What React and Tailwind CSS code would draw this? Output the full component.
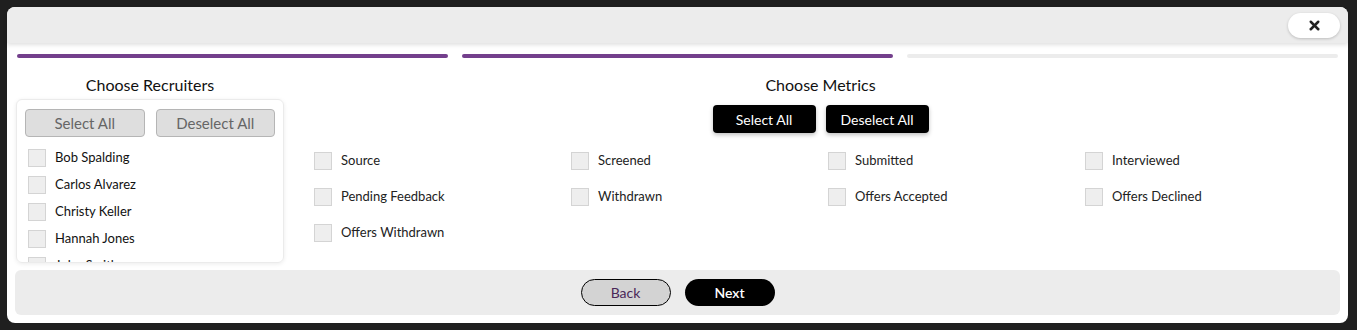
import React from 'react';
import { X } from 'lucide-react';

const recruiters = ['Bob Spalding', 'Carlos Alvarez', 'Christy Keller', 'Hannah Jones', 'John Smith'];

const metrics = [
  'Source', 'Screened', 'Submitted', 'Interviewed',
  'Pending Feedback', 'Withdrawn', 'Offers Accepted', 'Offers Declined',
  'Offers Withdrawn',
];

const Box = () => (
  <span className="inline-block w-[18px] h-[18px] bg-[#eeeeee] border border-[#d4d4d4] shrink-0" />
);

const App = () => {
  return (
    <div
      className="w-[1357px] h-[330px] bg-[#1f1f1f] pt-[7px] pl-[7px] overflow-hidden"
      style={{ fontFamily: 'Lato, "Noto Sans", sans-serif' }}
    >
      <div className="w-[1341px] h-[316px] bg-white rounded-[8px] flex flex-col">
        {/* header */}
        <div className="h-[36px] bg-[#ececec] rounded-t-[8px] shadow-[0_2px_4px_rgba(0,0,0,0.12)] flex items-center justify-end pr-[8px] shrink-0">
          <button className="w-[52px] h-[25px] rounded-full bg-white shadow-[0_1px_3px_rgba(0,0,0,0.2)] flex items-center justify-center">
            <X className="w-[15px] h-[15px] text-[#222]" strokeWidth={4} />
          </button>
        </div>

        {/* progress */}
        <div className="flex gap-[14px] px-[10px] mt-[11px]">
          <div className="h-[4px] w-[431px] rounded-full bg-[#733f8c]" />
          <div className="h-[4px] w-[431px] rounded-full bg-[#733f8c]" />
          <div className="h-[4px] w-[431px] rounded-full bg-[#ececec]" />
        </div>

        {/* body */}
        <div className="flex flex-1 min-h-0 pl-[9px] mt-[17px]">
          <div className="w-[268px] flex flex-col">
            <h3 className="text-[16px] leading-[20px] text-[#111] text-center">Choose Recruiters</h3>
            <div className="mt-[4px] h-[164px] border border-[#ebebeb] rounded-[6px] shadow-[0_1px_4px_rgba(0,0,0,0.08)] px-[8px] pt-[9px] overflow-hidden">
              <div className="flex gap-[11px]">
                <button className="w-[120px] h-[28px] bg-[#dedede] border border-[#b5b5b5] rounded-[4px] text-[15px] text-[#666]">Select All</button>
                <button className="w-[120px] h-[28px] bg-[#dedede] border border-[#b5b5b5] rounded-[4px] text-[15px] text-[#666]">Deselect All</button>
              </div>
              <ul className="mt-[12px] pl-[3px] flex flex-col gap-[9px]">
                {recruiters.map((r) => (
                  <li key={r} className="flex items-center gap-[9px] h-[18px] text-[13px] text-[#111]">
                    <Box />
                    {r}
                  </li>
                ))}
              </ul>
            </div>
          </div>

          <div className="w-[1043px] ml-[15px] flex flex-col">
            <h3 className="text-[16px] leading-[20px] text-[#111] text-center">Choose Metrics</h3>
            <div className="flex justify-center gap-[10px] mt-[10px]">
              <button className="w-[103px] h-[28px] bg-black text-white rounded-[4px] text-[14px] shadow-[0_2px_4px_rgba(0,0,0,0.25)]">Select All</button>
              <button className="w-[103px] h-[28px] bg-black text-white rounded-[4px] text-[14px] shadow-[0_2px_4px_rgba(0,0,0,0.25)]">Deselect All</button>
            </div>
            <div className="grid grid-cols-4 gap-y-[18px] pl-[15px] mt-[19px]">
              {metrics.map((m) => (
                <label key={m} className="flex items-center gap-[9px] h-[18px] text-[13px] text-[#222]">
                  <Box />
                  {m}
                </label>
              ))}
            </div>
          </div>
        </div>

        {/* footer */}
        <div className="mx-[8px] mb-[8px] h-[45px] bg-[#ececec] rounded-[6px] flex items-center justify-center gap-[14px] shrink-0">
          <button className="w-[90px] h-[27px] rounded-full bg-[#d3d3d3] border border-black text-[14px] text-[#4a2758]">Back</button>
          <button className="w-[90px] h-[27px] rounded-full bg-black text-white text-[14px] font-semibold">Next</button>
        </div>
      </div>
    </div>
  );
};

export default App;
